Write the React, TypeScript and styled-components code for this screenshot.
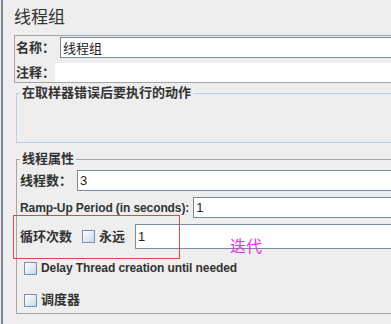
import styled, { createGlobalStyle } from 'styled-components';

const GlobalStyle = createGlobalStyle`
  html, body {
    margin: 0;
    padding: 0;
  }

  body {
    width: 391px;
    height: 324px;
    overflow: hidden;
    background: #eeeeee;
    color: #333333;
    font-family: 'Liberation Sans', 'Noto Sans CJK SC', sans-serif;
  }
`;

const Window = styled.div`
  position: relative;
  display: flex;
  width: 391px;
  height: 324px;
`;

const Splitter = styled.div`
  flex: none;
  width: 2px;
  margin-left: 1px;
  background: #7b8794;
`;

const Content = styled.main`
  flex: 1;
  min-width: 0;
  padding-left: 11px;
`;

const Title = styled.h1`
  margin: 8px 0 0;
  font-size: 17px;
  line-height: 20px;
  font-weight: normal;
  color: #333333;
`;

const NamePanel = styled.section`
  margin-top: 7px;
  padding: 1px 0 0 1px;
  border: 1px solid #a3a3a3;
  border-right: none;
`;

const Row = styled.div<{ $gap?: number; $top?: number; $height?: number }>`
  display: flex;
  align-items: center;
  gap: ${(p) => p.$gap ?? 0}px;
  margin-top: ${(p) => p.$top ?? 0}px;
  height: ${(p) => p.$height ?? 21}px;
`;

const Label = styled.span<{ $latin?: boolean }>`
  flex: none;
  font-size: ${(p) => (p.$latin ? 12 : 13)}px;
  letter-spacing: ${(p) => (p.$latin ? '-0.1px' : '0')};
  line-height: 16px;
  font-weight: bold;
  color: #333333;
  white-space: nowrap;
`;

const Field = styled.input<{ $offset?: number }>`
  flex: 1;
  align-self: stretch;
  min-width: 0;
  box-sizing: border-box;
  margin: 0 0 0 ${(p) => p.$offset ?? 0}px;
  padding: 0 2px;
  border: 1px solid #7a8a99;
  border-right: none;
  background: #ffffff;
  font-family: 'Liberation Sans', 'Noto Sans CJK SC', sans-serif;
  font-size: 13px;
  color: #222222;
  outline: none;
`;

const Plain = styled.div`
  flex: 1;
  align-self: stretch;
  background: #ffffff;
`;

const Group = styled.fieldset<{ $line: string; $top: number }>`
  margin: ${(p) => p.$top}px 0 0 2px;
  padding: 0;
  min-width: 0;
  border: 1px solid ${(p) => p.$line};
  border-right: none;
`;

const Legend = styled.legend`
  margin-left: 3px;
  padding: 0 2px;
  font-size: 13px;
  line-height: 16px;
  font-weight: bold;
  color: #333333;
`;

const Spacer = styled.div<{ $height: number }>`
  height: ${(p) => p.$height}px;
`;

const Body = styled.div`
  padding: 0 0 3px 3px;
`;

const Box = styled.span`
  flex: none;
  box-sizing: border-box;
  width: 13px;
  height: 13px;
  border: 1px solid #7d8fa3;
  background: linear-gradient(135deg, #ffffff 0%, #e4edf6 50%, #c6d6e8 100%);
`;

const Check = styled.label<{ $indent?: number }>`
  display: flex;
  align-items: center;
  gap: 4px;
  margin-left: ${(p) => p.$indent ?? 0}px;
`;

const Annotation = styled.div`
  position: absolute;
  left: 13px;
  top: 215px;
  width: 167px;
  height: 44px;
  box-sizing: border-box;
  border: 1px solid #e04848;
  pointer-events: none;
`;

const Note = styled.span`
  position: absolute;
  left: 230px;
  top: 235px;
  font-family: 'Noto Sans CJK SC', sans-serif;
  font-size: 16px;
  line-height: 20px;
  color: #e633e6;
`;

export default function App() {
  return (
    <Window>
      <GlobalStyle />
      <Splitter />
      <Content>
        <Title>线程组</Title>
        <NamePanel>
          <Row $gap={5}>
            <Label>名称：</Label>
            <Field readOnly value="线程组" />
          </Row>
          <Row $top={5} $height={19}>
            <Label>注释：</Label>
            <Plain />
          </Row>
        </NamePanel>

        <Group $line="#b8cfe5" $top={2}>
          <Legend>在取样器错误后要执行的动作</Legend>
          <Spacer $height={41} />
        </Group>

        <Group $line="#a5a5a5" $top={8}>
          <Legend>线程属性</Legend>
          <Body>
            <Row $gap={5} $top={3}>
              <Label>线程数：</Label>
              <Field readOnly value="3" />
            </Row>
            <Row $gap={4} $top={6}>
              <Label $latin>Ramp-Up Period (in seconds):</Label>
              <Field readOnly value="1" />
            </Row>
            <Row $top={6} $height={25}>
              <Label>循环次数</Label>
              <Check $indent={10}>
                <Box />
                <Label>永远</Label>
              </Check>
              <Field readOnly value="1" $offset={10} />
            </Row>
            <Row $top={9} $height={20}>
              <Check $indent={4}>
                <Box />
                <Label $latin>Delay Thread creation until needed</Label>
              </Check>
            </Row>
            <Row $top={12} $height={20}>
              <Check $indent={4}>
                <Box />
                <Label>调度器</Label>
              </Check>
            </Row>
          </Body>
        </Group>
      </Content>
      <Annotation />
      <Note>迭代</Note>
    </Window>
  );
}
